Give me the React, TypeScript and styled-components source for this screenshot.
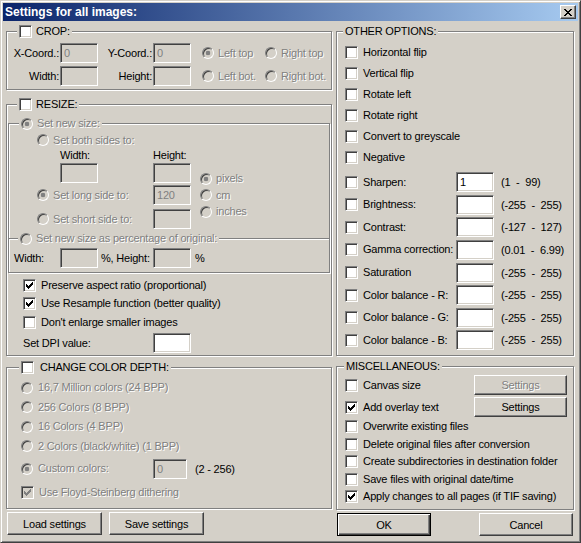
import React from "react"
import styled, { createGlobalStyle, css } from "styled-components"

const FACE = "#d4d0c8"
const SHADOW = "#808080"
const DARK = "#404040"

const GlobalStyle = createGlobalStyle`
  html, body {
    margin: 0;
    padding: 0;
    background: ${FACE};
  }
  body {
    font-family: "Liberation Sans", Arial, sans-serif;
    font-size: 11px;
    letter-spacing: -0.2px;
    color: #000;
  }
`

const Window = styled.div`
  width: 581px;
  height: 543px;
  box-sizing: border-box;
  border: 1px solid;
  border-color: ${FACE} ${DARK} ${DARK} ${FACE};
  box-shadow: inset 1px 1px 0 #fff, inset -1px -1px 0 ${SHADOW};
  padding: 2px;
  background: ${FACE};
  display: flex;
  flex-direction: column;
`

const TitleBar = styled.div`
  flex: none;
  height: 18px;
  display: flex;
  align-items: center;
  justify-content: space-between;
  padding: 0 2px;
  background: linear-gradient(to right, #0a246a, #a6caf0);
  color: #fff;
  font-weight: bold;
  font-size: 12px;
  letter-spacing: 0;
`

const CloseButton = styled.div`
  width: 16px;
  height: 14px;
  box-sizing: border-box;
  background: ${FACE};
  border: 1px solid;
  border-color: #fff ${DARK} ${DARK} #fff;
  box-shadow: inset -1px -1px 0 ${SHADOW};
  display: flex;
  align-items: center;
  justify-content: center;
`

const Content = styled.div`
  display: grid;
  grid-template-columns: 326px 238px;
  column-gap: 4px;
  padding: 4px 4px 0 3px;
`

const Column = styled.div`
  display: flex;
  flex-direction: column;
`

const Group = styled.fieldset<{ $h: number; $mt?: number; $inner?: boolean }>`
  flex: none;
  margin: ${(p) => p.$mt ?? 0}px ${(p) => (p.$inner ? 1 : 0)}px 0;
  padding: 0;
  min-width: 0;
  box-sizing: border-box;
  height: ${(p) => p.$h}px;
  border: 1px solid ${SHADOW};
  box-shadow: inset 1px 1px 0 #fff, 1px 1px 0 #fff;
`

const Legend = styled.legend<{ $indent: number }>`
  margin-left: ${(p) => p.$indent}px;
  padding: 0 2px;
  height: 13px;
  line-height: 13px;
  display: flex;
  align-items: center;
  background: ${FACE};
`

const Option = styled.label<{ $gap?: number }>`
  display: inline-flex;
  align-items: center;
  gap: ${(p) => p.$gap ?? 5}px;
  height: 13px;
  line-height: 13px;
  white-space: nowrap;
`

const Text = styled.span<{ $disabled?: boolean; $pad?: number }>`
  white-space: pre;
  padding-left: ${(p) => p.$pad ?? 0}px;
  ${(p) =>
    p.$disabled &&
    css`
      color: ${SHADOW};
      text-shadow: 1px 1px 0 #fff;
    `}
`

const Box = styled.span<{ $disabled?: boolean }>`
  flex: none;
  width: 13px;
  height: 13px;
  box-sizing: border-box;
  border: 1px solid;
  border-color: ${SHADOW} #fff #fff ${SHADOW};
  box-shadow: inset 1px 1px 0 ${DARK}, inset -1px -1px 0 ${FACE};
  background: ${(p) => (p.$disabled ? FACE : "#fff")};
  display: flex;
  align-items: center;
  justify-content: center;
`

const Round = styled.span<{ $on?: boolean; $disabled?: boolean }>`
  flex: none;
  width: 12px;
  height: 12px;
  box-sizing: border-box;
  border-radius: 50%;
  border: 1px solid;
  border-color: ${SHADOW} #fff #fff ${SHADOW};
  box-shadow: inset 1px 1px 0 ${DARK}, inset -1px -1px 0 ${FACE};
  background: ${({ $on, $disabled }) => {
    const fill = $disabled ? FACE : "#fff"
    const dot = $disabled ? SHADOW : "#000"
    return $on ? `radial-gradient(circle, ${dot} 0 2px, ${fill} 2.6px)` : fill
  }};
`

const Field = styled.input<{ $w?: number }>`
  width: ${(p) => p.$w ?? 38}px;
  height: 20px;
  box-sizing: border-box;
  margin: 0;
  padding: 0 3px;
  border: 1px solid;
  border-color: ${SHADOW} #fff #fff ${SHADOW};
  box-shadow: inset 1px 1px 0 ${DARK}, inset -1px -1px 0 ${FACE};
  background: #fff;
  font: inherit;
  letter-spacing: inherit;
  color: #000;
  outline: none;
  align-self: start;
  &:disabled {
    background: ${FACE};
    color: ${SHADOW};
  }
`

const Button = styled.button<{ $w?: number; $h?: number; $default?: boolean }>`
  width: ${(p) => p.$w ?? 95}px;
  height: ${(p) => p.$h ?? 23}px;
  box-sizing: border-box;
  margin: 0;
  padding: 0;
  font: inherit;
  letter-spacing: inherit;
  color: #000;
  background: ${FACE};
  border: 1px solid;
  border-color: #fff ${DARK} ${DARK} #fff;
  box-shadow: inset -1px -1px 0 ${SHADOW}, inset 1px 1px 0 ${FACE};
  ${(p) =>
    p.$default &&
    css`
      border-color: #000;
      box-shadow: inset 1px 1px 0 #fff, inset -1px -1px 0 ${DARK},
        inset -2px -2px 0 ${SHADOW};
    `}
  &:disabled {
    color: ${SHADOW};
    text-shadow: 1px 1px 0 #fff;
  }
`

const Cell = styled.div<{ $col?: string; $row?: string; $indent?: number; $top?: boolean }>`
  display: flex;
  align-items: ${(p) => (p.$top ? "flex-start" : "center")};
  padding-left: ${(p) => p.$indent ?? 0}px;
  white-space: nowrap;
  ${(p) => p.$col && `grid-column: ${p.$col};`}
  ${(p) => p.$row && `grid-row: ${p.$row};`}
`

const RightLabel = styled.div`
  justify-self: end;
  padding-right: 1px;
  white-space: nowrap;
`

/* CROP */
const CropGrid = styled.div`
  display: grid;
  grid-template-columns: 53px 38px 55px 38px 74px auto;
  grid-auto-rows: 20px;
  row-gap: 3px;
  align-items: center;
  padding-top: 5px;
`

/* RESIZE */
const SizeGrid = styled.div`
  display: grid;
  grid-template-columns: 51px 93px 38px 1fr;
  grid-template-rows: 14px 16px 22px 24px 20px;
  padding-top: 3px;
`

const Units = styled.div`
  grid-column: 4;
  grid-row: 3 / 6;
  display: flex;
  flex-direction: column;
  gap: 3.5px;
  padding: 9px 0 0 9px;
`

const PercentRow = styled.div`
  display: grid;
  grid-template-columns: 51px 38px 55px 38px auto;
  height: 20px;
  align-items: center;
  margin-top: 3px;
`

const ResizeList = styled.div`
  display: flex;
  flex-direction: column;
  padding: 3px 0 0 16px;
`

const ListRow = styled.div<{ $h: number }>`
  height: ${(p) => p.$h}px;
  display: flex;
  align-items: center;
`

const DpiRow = styled.div`
  display: grid;
  grid-template-columns: 130px 38px;
  align-items: center;
  height: 20px;
  margin-top: 1.5px;
`

/* COLOR DEPTH */
const DepthList = styled.div`
  display: flex;
  flex-direction: column;
  padding: 4px 0 0 14px;
`

const CustomRow = styled.div`
  display: grid;
  grid-template-columns: 132px 34px auto;
  align-items: center;
  height: 20px;
  margin: 2.75px 0 4px;
`

const ButtonRow = styled.div<{ $spread?: boolean }>`
  display: flex;
  gap: 7px;
  margin-top: 3px;
  padding: 0 1px;
  justify-content: ${(p) => (p.$spread ? "space-between" : "flex-start")};
`

/* OTHER OPTIONS */
const OtherList = styled.div`
  display: flex;
  flex-direction: column;
  padding: 3.5px 0 0 8px;
`

const ValueRows = styled.div`
  display: flex;
  flex-direction: column;
  gap: 2.65px;
  margin-top: 4.5px;
`

const ValueRow = styled.div`
  display: grid;
  grid-template-columns: 111px 38px auto;
  align-items: center;
  height: 20px;
`

/* MISC */
const MiscBody = styled.div`
  display: flex;
  flex-direction: column;
  padding: 2px 6px 0 8px;
`

const MiscTop = styled.div`
  display: grid;
  grid-template-columns: 1fr 93px;
  grid-auto-rows: 20px;
  row-gap: 2px;
  align-items: center;
`

const MiscList = styled.div`
  display: flex;
  flex-direction: column;
  margin-top: 1px;
`

const Check = ({ on, disabled }: { on?: boolean; disabled?: boolean }) => (
  <Box $disabled={disabled}>
    {on && (
      <svg width="7" height="7" viewBox="0 0 7 7" shapeRendering="crispEdges">
        <path
          d="M6 0h1v1h-1z M5 1h2v1h-2z M0 2h1v1h-1z M4 2h3v1h-3z M0 3h2v1h-2z M3 3h3v1h-3z M0 4h5v1h-5z M1 5h3v1h-3z M2 6h1v1h-1z"
          fill={disabled ? SHADOW : "#000"}
        />
      </svg>
    )}
  </Box>
)

interface OptProps {
  label: string
  on?: boolean
  disabled?: boolean
  gap?: number
}

const CheckOption = ({ label, on, disabled, gap }: OptProps) => (
  <Option $gap={gap}>
    <Check on={on} disabled={disabled} />
    <Text $disabled={disabled}>{label}</Text>
  </Option>
)

const RadioOption = ({ label, on, disabled, gap }: OptProps) => (
  <Option $gap={gap ?? 4}>
    <Round $on={on} $disabled={disabled} />
    <Text $disabled={disabled}>{label}</Text>
  </Option>
)

const simpleOptions = [
  "Horizontal flip",
  "Vertical flip",
  "Rotate left",
  "Rotate right",
  "Convert to greyscale",
  "Negative",
]

const valueOptions = [
  { label: "Sharpen:", value: "1", range: "(1  -  99)" },
  { label: "Brightness:", value: "", range: "(-255  -  255)" },
  { label: "Contrast:", value: "", range: "(-127  -  127)" },
  { label: "Gamma correction:", value: "", range: "(0.01  -  6.99)" },
  { label: "Saturation", value: "", range: "(-255  -  255)" },
  { label: "Color balance - R:", value: "", range: "(-255  -  255)" },
  { label: "Color balance - G:", value: "", range: "(-255  -  255)" },
  { label: "Color balance - B:", value: "", range: "(-255  -  255)" },
]

const miscOptions = [
  { label: "Overwrite existing files" },
  { label: "Delete original files after conversion" },
  { label: "Create subdirectories in destination folder" },
  { label: "Save files with original date/time" },
  { label: "Apply changes to all pages (if TIF saving)", on: true },
]

const depthOptions = [
  "16,7 Million colors (24 BPP)",
  "256 Colors (8 BPP)",
  "16 Colors (4 BPP)",
  "2 Colors (black/white) (1 BPP)",
]

export default function App() {
  return (
    <>
      <GlobalStyle />
      <Window>
        <TitleBar>
          <span>Settings for all images:</span>
          <CloseButton>
            <svg width="8" height="7" viewBox="0 0 8 7" shapeRendering="crispEdges">
              <path
                d="M0 0h2v1h-2z M6 0h2v1h-2z M1 1h2v1h-2z M5 1h2v1h-2z M2 2h4v1h-4z M3 3h2v1h-2z M2 4h4v1h-4z M1 5h2v1h-2z M5 5h2v1h-2z M0 6h2v1h-2z M6 6h2v1h-2z"
                fill="#000"
              />
            </svg>
          </CloseButton>
        </TitleBar>

        <Content>
          <Column>
            <Group $h={65}>
              <Legend $indent={10}>
                <CheckOption label="CROP:" gap={4} />
              </Legend>
              <CropGrid>
                <RightLabel>X-Coord.:</RightLabel>
                <Field disabled value="0" readOnly />
                <RightLabel>Y-Coord.:</RightLabel>
                <Field disabled value="0" readOnly />
                <Cell $indent={11}>
                  <RadioOption label="Left top" on disabled />
                </Cell>
                <Cell>
                  <RadioOption label="Right top" disabled />
                </Cell>
                <RightLabel>Width:</RightLabel>
                <Field disabled value="" readOnly />
                <RightLabel>Height:</RightLabel>
                <Field disabled value="" readOnly />
                <Cell $indent={11}>
                  <RadioOption label="Left bot." disabled />
                </Cell>
                <Cell>
                  <RadioOption label="Right bot." disabled />
                </Cell>
              </CropGrid>
            </Group>

            <Group $h={258} $mt={8}>
              <Legend $indent={10}>
                <CheckOption label="RESIZE:" gap={4} />
              </Legend>

              <Group $h={122} $mt={6} $inner>
                <Legend $indent={10}>
                  <RadioOption label="Set new size:" on disabled />
                </Legend>
                <SizeGrid>
                  <Cell $col="1 / 4" $row="1" $indent={28}>
                    <RadioOption label="Set both sides to:" disabled />
                  </Cell>
                  <Cell $col="2" $row="2">Width:</Cell>
                  <Cell $col="3" $row="2">Height:</Cell>
                  <Cell $col="2" $row="3" $top>
                    <Field disabled value="" readOnly />
                  </Cell>
                  <Cell $col="3" $row="3" $top>
                    <Field disabled value="" readOnly />
                  </Cell>
                  <Cell $col="1 / 3" $row="4" $indent={28} $top>
                    <ListRow $h={20}>
                      <RadioOption label="Set long side to:" on disabled />
                    </ListRow>
                  </Cell>
                  <Cell $col="3" $row="4" $top>
                    <Field disabled value="120" readOnly />
                  </Cell>
                  <Cell $col="1 / 3" $row="5" $indent={28}>
                    <RadioOption label="Set short side to:" disabled />
                  </Cell>
                  <Cell $col="3" $row="5" $top>
                    <Field disabled value="" readOnly />
                  </Cell>
                  <Units>
                    <RadioOption label="pixels" on disabled />
                    <RadioOption label="cm" disabled />
                    <RadioOption label="inches" disabled />
                  </Units>
                </SizeGrid>
              </Group>

              <Group $h={41} $mt={-7} $inner>
                <Legend $indent={9}>
                  <RadioOption label="Set new size as percentage of original:" disabled />
                </Legend>
                <PercentRow>
                  <Cell $indent={5}>Width:</Cell>
                  <Field disabled value="" readOnly />
                  <Cell $indent={3}>%, Height:</Cell>
                  <Field disabled value="" readOnly />
                  <Cell $indent={4}>%</Cell>
                </PercentRow>
              </Group>

              <ResizeList>
                <ListRow $h={18.5}>
                  <CheckOption label="Preserve aspect ratio (proportional)" on />
                </ListRow>
                <ListRow $h={18.5}>
                  <CheckOption label="Use Resample function (better quality)" on />
                </ListRow>
                <ListRow $h={18.5}>
                  <CheckOption label="Don't enlarge smaller images" />
                </ListRow>
                <DpiRow>
                  <span>Set DPI value:</span>
                  <Field value="" readOnly />
                </DpiRow>
              </ResizeList>
            </Group>

            <Group $h={148} $mt={5}>
              <Legend $indent={12}>
                <CheckOption label="CHANGE COLOR DEPTH:" gap={6} />
              </Legend>
              <DepthList>
                {depthOptions.map((label) => (
                  <ListRow key={label} $h={19.5}>
                    <RadioOption label={label} disabled gap={5} />
                  </ListRow>
                ))}
                <CustomRow>
                  <RadioOption label="Custom colors:" on disabled gap={5} />
                  <Field $w={34} disabled value="0" readOnly />
                  <Cell $indent={8}>(2 - 256)</Cell>
                </CustomRow>
                <ListRow $h={19.5}>
                  <CheckOption label="Use Floyd-Steinberg dithering" on disabled />
                </ListRow>
              </DepthList>
            </Group>

            <ButtonRow>
              <Button>Load settings</Button>
              <Button>Save settings</Button>
            </ButtonRow>
          </Column>

          <Column>
            <Group $h={331}>
              <Legend $indent={6}>OTHER OPTIONS:</Legend>
              <OtherList>
                {simpleOptions.map((label) => (
                  <ListRow key={label} $h={21}>
                    <CheckOption label={label} />
                  </ListRow>
                ))}
                <ValueRows>
                  {valueOptions.map((o) => (
                    <ValueRow key={o.label}>
                      <CheckOption label={o.label} />
                      <Field value={o.value} readOnly />
                      <Text $pad={7}>{o.range}</Text>
                    </ValueRow>
                  ))}
                </ValueRows>
              </OtherList>
            </Group>

            <Group $h={150} $mt={4}>
              <Legend $indent={7}>MISCELLANEOUS:</Legend>
              <MiscBody>
                <MiscTop>
                  <CheckOption label="Canvas size" />
                  <Button $w={93} $h={20} disabled>
                    Settings
                  </Button>
                  <CheckOption label="Add overlay text" on />
                  <Button $w={93} $h={20}>
                    Settings
                  </Button>
                </MiscTop>
                <MiscList>
                  {miscOptions.map((o) => (
                    <ListRow key={o.label} $h={17.5}>
                      <CheckOption label={o.label} on={o.on} />
                    </ListRow>
                  ))}
                </MiscList>
              </MiscBody>
            </Group>

            <ButtonRow $spread>
              <Button $w={94} $default>
                OK
              </Button>
              <Button $w={94}>Cancel</Button>
            </ButtonRow>
          </Column>
        </Content>
      </Window>
    </>
  )
}
